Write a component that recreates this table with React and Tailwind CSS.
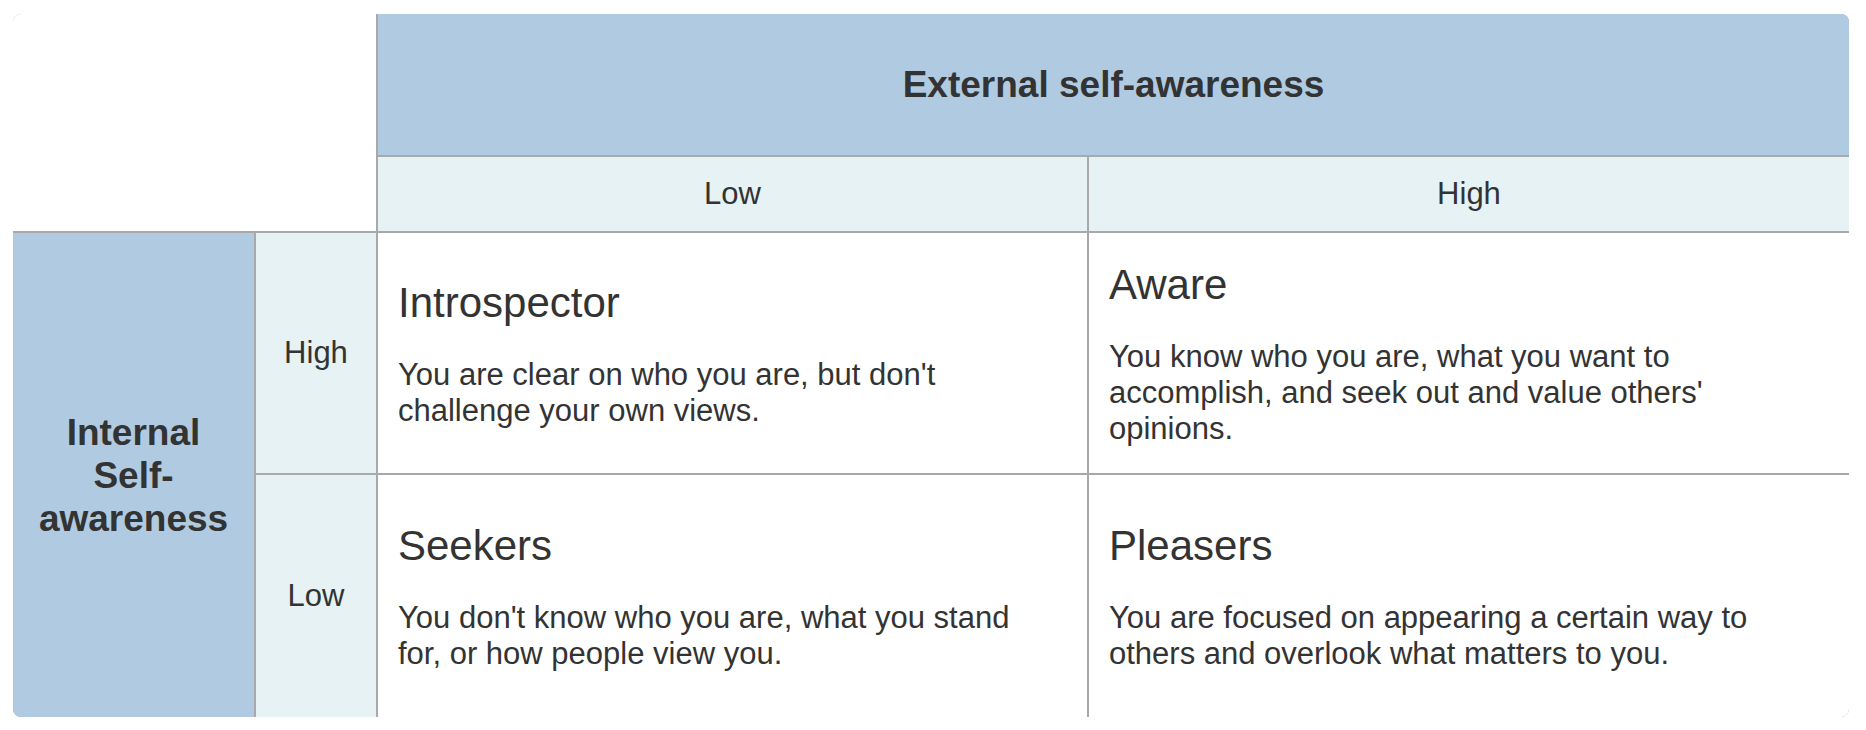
import React from "react";

const font = "font-['Liberation_Sans',Arial,sans-serif]";

function Quadrant({ title, lines }) {
  return (
    <div className="bg-white flex flex-col justify-center px-[20px]">
      <div className="text-[42px] leading-[50px] mb-[29px]">{title}</div>
      <div className="text-[31px] leading-[36px]">
        {lines.map((l, i) => (
          <div key={i}>{l}</div>
        ))}
      </div>
    </div>
  );
}

export default function App() {
  return (
    <div className={`bg-white w-[1866px] h-[730px] pt-[14px] pl-[13px] text-[#333333] ${font}`}>
      <div className="grid grid-cols-[241px_120px_709px_760px] grid-rows-[141px_74px_240px_242px] gap-[2px] bg-[#a9a9a9] rounded-[8px] overflow-hidden w-[1836px]">
        <div className="col-span-2 row-span-2 bg-white"></div>
        <div className="col-span-2 bg-[#b0cbe1] flex items-center justify-center font-bold text-[37px]">
          External self-awareness
        </div>
        <div className="bg-[#e7f2f5] flex items-center justify-center text-[31px]">Low</div>
        <div className="bg-[#e7f2f5] flex items-center justify-center text-[31px]">High</div>

        <div className="row-span-2 bg-[#b0cbe1] flex items-center justify-center text-center font-bold text-[37px] leading-[43px]">
          <div>
            Internal
            <br />
            Self-
            <br />
            awareness
          </div>
        </div>
        <div className="bg-[#e7f2f5] flex items-center justify-center text-[31px]">High</div>
        <Quadrant
          title="Introspector"
          lines={["You are clear on who you are, but don't", "challenge your own views."]}
        />
        <Quadrant
          title="Aware"
          lines={[
            "You know who you are, what you want to",
            "accomplish, and seek out and value others'",
            "opinions.",
          ]}
        />
        <div className="bg-[#e7f2f5] flex items-center justify-center text-[31px]">Low</div>
        <Quadrant
          title="Seekers"
          lines={["You don't know who you are, what you stand", "for, or how people view you."]}
        />
        <Quadrant
          title="Pleasers"
          lines={["You are focused on appearing a certain way to", "others and overlook what matters to you."]}
        />
      </div>
    </div>
  );
}
